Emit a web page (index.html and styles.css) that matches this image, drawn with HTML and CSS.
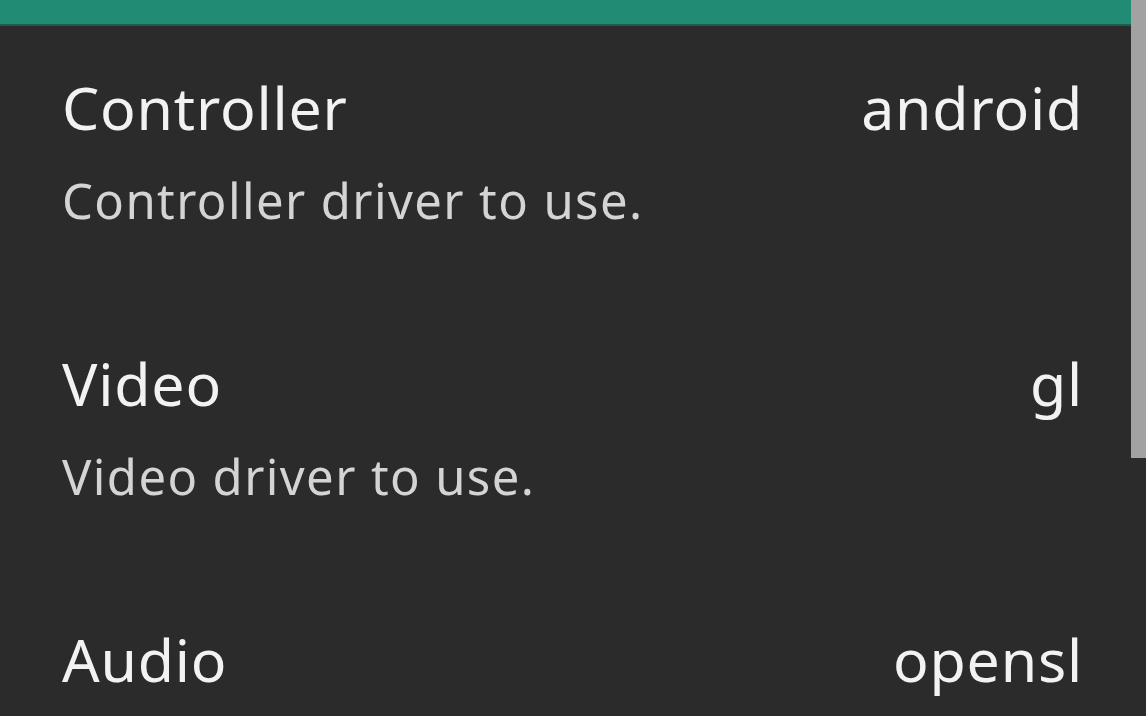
FILE: index.html
```html
<!DOCTYPE html>
<html lang="en">
<head>
    <meta charset="UTF-8">
    <meta name="viewport" content="width=device-width, initial-scale=1.0">
    <title>Settings</title>
    <link rel="stylesheet" href="styles.css">
</head>
<body>

    <div class="action-bar"></div>

    <div class="pref-list">
        <div class="pref">
            <div class="pref-head">
                <span class="pref-title">Controller</span>
                <span class="pref-value">android</span>
            </div>
            <div class="pref-summary">Controller driver to use.</div>
        </div>
        <div class="pref">
            <div class="pref-head">
                <span class="pref-title">Video</span>
                <span class="pref-value">gl</span>
            </div>
            <div class="pref-summary">Video driver to use.</div>
        </div>
        <div class="pref">
            <div class="pref-head">
                <span class="pref-title">Audio</span>
                <span class="pref-value">opensl</span>
            </div>
        </div>
    </div>

    <div class="scrollbar"></div>

</body>
</html>
```

FILE: styles.css
```css
html, body {
    margin: 0;
    padding: 0;
    height: 100%;
    overflow: hidden;
}

body {
    font-family: 'Noto Sans', 'Noto Sans CJK JP', sans-serif;
    background-color: #2b2b2b;
    color: #f2f2f2;
}

.action-bar {
    height: 24px;
    background-color: #228b73;
    border-bottom: 2px solid #1a5e4f;
}

.pref-list {
    padding: 0 63px 0 62px;
}

.pref {
    height: 276px;
    box-sizing: border-box;
    padding-top: 41px;
}

.pref-head {
    display: flex;
    justify-content: space-between;
    align-items: baseline;
    font-size: 59px;
    line-height: 80px;
    letter-spacing: 0.8px;
}

.pref-summary {
    font-size: 49px;
    line-height: 60px;
    margin-top: 23px;
    color: #d4d4d4;
    letter-spacing: 1.4px;
}

.scrollbar {
    position: absolute;
    top: 0;
    right: 0;
    width: 15px;
    height: 458px;
    background-color: #a2a2a2;
}
```
